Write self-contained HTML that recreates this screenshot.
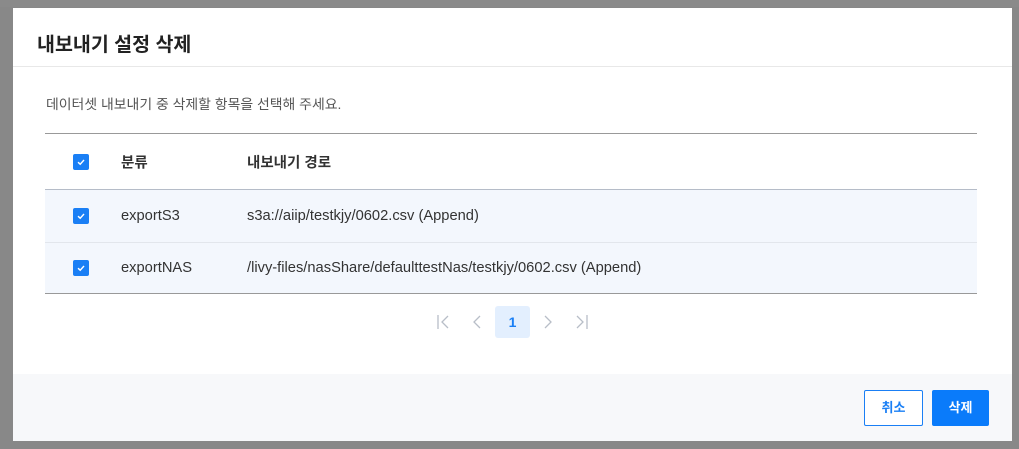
<!DOCTYPE html>
<html><head><meta charset="utf-8"><style>
*{box-sizing:border-box;margin:0;padding:0}
body{width:1019px;height:449px;background:#888;font-family:"Liberation Sans","Noto Sans CJK KR",sans-serif;position:relative;overflow:hidden}
.top{position:absolute;left:0;top:0;width:1019px;height:7px;background:#8a8a8a}
.dlg{position:absolute;left:13px;top:8px;width:999px;height:433px;background:#fff;overflow:hidden}
.title{position:absolute;left:24px;top:20px;font-size:19.5px;font-weight:bold;color:#222}
.hr{position:absolute;left:0;top:58px;width:100%;height:1px;background:#e8e8e8}
.desc{position:absolute;left:33px;top:86px;font-size:13.9px;color:#555}
.tbl{position:absolute;left:32px;top:125px;width:932px;border-top:1px solid #999;border-bottom:1px solid #999}
.row{height:52px;position:relative;font-size:14.7px;color:#333}
.row.h{height:56px;font-weight:bold;font-size:14.5px;border-bottom:1px solid #b5bcc8}
.row.d{background:#f3f7fd}
.row.d+.row.d{border-top:1px solid #e2e6ec;height:51px}
.cb{position:absolute;left:28px;top:50%;margin-top:-8px;width:16px;height:16px;border-radius:2px;background:#1a7ff5}
.cb svg{position:absolute;left:3px;top:3px}
.c1{position:absolute;left:76px;top:50%;transform:translateY(-50%)}
.c2{position:absolute;left:202px;top:50%;transform:translateY(-50%)}
.act{position:absolute;left:482px;top:298px;width:35px;height:32px;background:#e3effe;border-radius:3px;color:#1a7ff5;font-weight:bold;font-size:14px;text-align:center;line-height:32px}
.foot{position:absolute;left:0;top:366px;width:100%;height:67px;background:#f7f8fa}
.btn{position:absolute;top:16px;height:36px;border-radius:2px;font-size:13px;font-weight:bold;text-align:center;line-height:34px}
</style></head><body>
<div class="top"></div>
<div class="dlg">
<div class="title">내보내기 설정 삭제</div>
<div class="hr"></div>
<div class="desc">데이터셋 내보내기 중 삭제할 항목을 선택해 주세요.</div>
<div class="tbl">
<div class="row h"><div class="cb"><svg width="10" height="10" viewBox="0 0 10 10"><path d="M2 5.2L4.2 7.2 8 3" stroke="#fff" stroke-width="1.4" fill="none"/></svg></div><div class="c1">분류</div><div class="c2">내보내기 경로</div></div>
<div class="row d"><div class="cb"><svg width="10" height="10" viewBox="0 0 10 10"><path d="M2 5.2L4.2 7.2 8 3" stroke="#fff" stroke-width="1.4" fill="none"/></svg></div><div class="c1">exportS3</div><div class="c2">s3a://aiip/testkjy/0602.csv (Append)</div></div>
<div class="row d"><div class="cb"><svg width="10" height="10" viewBox="0 0 10 10"><path d="M2 5.2L4.2 7.2 8 3" stroke="#fff" stroke-width="1.4" fill="none"/></svg></div><div class="c1">exportNAS</div><div class="c2">/livy-files/nasShare/defaulttestNas/testkjy/0602.csv (Append)</div></div>
</div>
<svg style="position:absolute;left:422px;top:305px" width="160" height="18" viewBox="0 0 160 18" fill="none" stroke="#b8bec8" stroke-width="1.3">
<path d="M3 2v14M13 3L7 9l6 6"/>
<path d="M45 3l-6 6 6 6"/>
<path d="M110 3l6 6-6 6"/>
<path d="M142 3l6 6-6 6M152 2v14"/>
</svg>
<div class="act">1</div>
<div class="foot">
<div class="btn" style="left:851px;width:59px;border:1px solid #1a7ff5;background:#fff;color:#1a7ff5">취소</div>
<div class="btn" style="left:919px;width:57px;background:#0a7bfa;color:#fff;line-height:36px">삭제</div>
</div>
</div>
</body></html>
